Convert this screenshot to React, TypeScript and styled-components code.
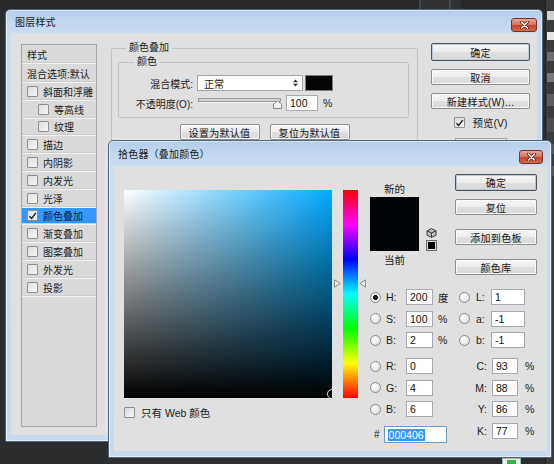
import React from "react";
import styled, { createGlobalStyle } from "styled-components";

const GlobalStyle = createGlobalStyle`
  html, body {
    margin: 0;
    padding: 0;
    background: #2a2c2e;
  }
  body {
    font-family: "Liberation Sans", "Noto Sans CJK SC", sans-serif;
    font-size: 10px;
    color: #1b1b1b;
  }
  * {
    box-sizing: border-box;
  }
`;

type StyleItem = {
  label: string;
  indent?: boolean;
  checked?: boolean;
  selected?: boolean;
};

type Field = {
  key: string;
  value: string;
  unit?: string;
  checked?: boolean;
};

const styleItems: StyleItem[] = [
  { label: "斜面和浮雕" },
  { label: "等高线", indent: true },
  { label: "纹理", indent: true },
  { label: "描边" },
  { label: "内阴影" },
  { label: "内发光" },
  { label: "光泽" },
  { label: "颜色叠加", checked: true, selected: true },
  { label: "渐变叠加" },
  { label: "图案叠加" },
  { label: "外发光" },
  { label: "投影" },
];

const hsbFields: Field[] = [
  { key: "H", value: "200", unit: "度", checked: true },
  { key: "S", value: "100", unit: "%" },
  { key: "B", value: "2", unit: "%" },
];
const rgbFields: Field[] = [
  { key: "R", value: "0" },
  { key: "G", value: "4" },
  { key: "B", value: "6" },
];
const labFields: Field[] = [
  { key: "L", value: "1" },
  { key: "a", value: "-1" },
  { key: "b", value: "-1" },
];
const cmykFields: Field[] = [
  { key: "C", value: "93" },
  { key: "M", value: "88" },
  { key: "Y", value: "86" },
  { key: "K", value: "77" },
];

/* ---------- desktop ---------- */

const Desktop = styled.div`
  position: relative;
  width: 554px;
  height: 464px;
  overflow: hidden;
  background: #2a2c2e;
  display: flex;
`;

const DesktopMain = styled.div`
  flex: 1;
  display: flex;
  flex-direction: column;
`;

const TopStrip = styled.div`
  height: 9px;
  display: flex;
  justify-content: flex-end;
  padding-right: 84px;
  background: #27292b;
`;

const TopTab = styled.div<{ $w: number }>`
  width: ${(p) => p.$w}px;
  border-left: 2px solid #45484b;
  background: #303234;
`;

const DesktopFill = styled.div`
  flex: 1;
`;

const BottomStrip = styled.div`
  height: 6px;
  display: flex;
  justify-content: flex-end;
  padding-right: 24px;
  background: #2b2d2f;
`;

const TrayIcon = styled.div`
  width: 19px;
  height: 6px;
  background: #e9f3e9;
  border: 1px solid #9ab79a;
  border-bottom: none;
  display: flex;
  justify-content: center;
  &::after {
    content: "";
    width: 9px;
    height: 4px;
    margin-top: 1px;
    background: #35b24a;
  }
`;

const SidePanel = styled.div`
  width: 9px;
  background: #3a3b3d;
  border-left: 1px solid #222;
  display: flex;
  flex-direction: column;
  align-items: flex-end;
  padding-top: 11px;
  gap: 12px;
`;

const SideIcon = styled.div<{ $h: number; $c: string }>`
  width: 7px;
  height: ${(p) => p.$h}px;
  background: ${(p) => p.$c};
`;

/* ---------- window chrome ---------- */

const Window = styled.div<{ $x: number; $y: number; $w: number; $h: number }>`
  position: absolute;
  left: ${(p) => p.$x}px;
  top: ${(p) => p.$y}px;
  width: ${(p) => p.$w}px;
  height: ${(p) => p.$h}px;
  display: flex;
  flex-direction: column;
  padding: 0 5px 6px;
  border: 1px solid #53677c;
  border-radius: 5px 5px 0 0;
  background: linear-gradient(to bottom, #b4cde8 0, #c4d8ee 14px, #cbddf1 26px, #c7daee 100%);
  box-shadow: inset 0 0 0 1px rgba(255, 255, 255, 0.45);
`;

const TitleBar = styled.div<{ $h: number; $pr: number }>`
  height: ${(p) => p.$h}px;
  flex: none;
  display: flex;
  align-items: center;
  justify-content: space-between;
  padding: 0 ${(p) => p.$pr}px 0 4px;
`;

const TitleText = styled.span`
  font-size: 10px;
  color: #1a1a1a;
  letter-spacing: 0.2px;
`;

const CloseButton = styled.div<{ $w: number; $mt: number }>`
  width: ${(p) => p.$w}px;
  height: 14px;
  margin-top: ${(p) => p.$mt}px;
  border: 1px solid #7b3226;
  border-radius: 3px;
  background: linear-gradient(to bottom, #e7a394 0%, #d7775f 45%, #c5432c 55%, #d46a4d 100%);
  display: flex;
  align-items: center;
  justify-content: center;
`;

const CloseIcon = () => (
  <svg width="9" height="8" viewBox="0 0 9 8">
    <path d="M1.5 1 L7.5 7 M7.5 1 L1.5 7" stroke="#5a1c12" strokeWidth="3" strokeLinecap="round" />
    <path d="M1.5 1 L7.5 7 M7.5 1 L1.5 7" stroke="#ffffff" strokeWidth="1.5" strokeLinecap="round" />
  </svg>
);

/* ---------- common controls ---------- */

const Button = styled.div<{ $w?: number; $h?: number; $mt?: number; $default?: boolean }>`
  width: ${(p) => (p.$w ? `${p.$w}px` : "100%")};
  height: ${(p) => p.$h ?? 16}px;
  margin-top: ${(p) => p.$mt ?? 0}px;
  flex: none;
  display: flex;
  align-items: center;
  justify-content: center;
  border: 1px solid ${(p) => (p.$default ? "#4f5357" : "#8f8f8f")};
  border-radius: 2px;
  background: linear-gradient(to bottom, #f6f6f6 0%, #ececec 50%, #e0e0e0 51%, #d9d9d9 100%);
  box-shadow: ${(p) => (p.$default ? "inset 0 0 0 1px #b9c9da" : "inset 0 0 0 1px #fafafa")};
  font-size: 10px;
  color: #151515;
  letter-spacing: 0.3px;
`;

const Box = styled.span<{ $size?: number }>`
  width: ${(p) => p.$size ?? 11}px;
  height: ${(p) => p.$size ?? 11}px;
  flex: none;
  display: inline-flex;
  align-items: center;
  justify-content: center;
  border: 1px solid #8e8f91;
  border-radius: 1px;
  background: linear-gradient(135deg, #dcdcdc 0%, #f7f7f7 100%);
`;

const CheckMark = () => (
  <svg width="10" height="10" viewBox="0 0 10 10">
    <path d="M1.6 5.2 L4 7.8 L8.8 1.6" fill="none" stroke="#1a1a1a" strokeWidth="1.5" />
  </svg>
);

const Checkbox: React.FC<{ checked?: boolean }> = ({ checked }) => (
  <Box>{checked && <CheckMark />}</Box>
);

const Radio = styled.span<{ $checked?: boolean }>`
  width: 11px;
  height: 11px;
  flex: none;
  border-radius: 50%;
  border: 1px solid #8a8a8a;
  background: ${(p) =>
    p.$checked
      ? "radial-gradient(circle, #1b1b1b 0, #1b1b1b 2.3px, #f4f4f4 2.8px, #e2e2e2 100%)"
      : "radial-gradient(circle at 35% 35%, #ffffff 0, #f1f1f1 40%, #d6d6d6 100%)"};
`;

const TextBox = styled.div<{ $w: number; $h?: number; $focus?: boolean }>`
  width: ${(p) => p.$w}px;
  height: ${(p) => p.$h ?? 16}px;
  flex: none;
  display: flex;
  align-items: center;
  padding-left: 3px;
  background: #ffffff;
  border: 1px solid ${(p) => (p.$focus ? "#6f9bc9" : "#a4aab1")};
  font-size: 10.5px;
  color: #111;
`;

const Selection = styled.span`
  background: #3399ff;
  color: #ffffff;
  padding: 0 1px;
  line-height: 12px;
`;

/* ---------- layer style dialog ---------- */

const LayerBody = styled.div`
  flex: 1;
  display: flex;
  align-items: flex-start;
  padding: 0 9px 0 10px;
  background: #e0e0e0;
`;

const StyleList = styled.div`
  margin-top: 11px;
  width: 76px;
  height: 383px;
  flex: none;
  border: 1px solid #a6a6a6;
  background: #dadada;
`;

const ListRow = styled.div<{ $h: number; $selected?: boolean; $indent?: boolean }>`
  height: ${(p) => p.$h}px;
  display: flex;
  align-items: center;
  gap: 5px;
  padding-left: ${(p) => (p.$indent ? 16 : 5)}px;
  border-bottom: 1px solid #f2f2f2;
  box-shadow: inset 0 -1px 0 #cdcdcd;
  background: ${(p) => (p.$selected ? "#3399ff" : "transparent")};
  color: ${(p) => (p.$selected ? "#0c1a2c" : "#1b1b1b")};
  white-space: nowrap;
`;

const Middle = styled.div`
  margin-left: 14px;
  width: 307px;
  flex: none;
`;

const Group = styled.fieldset<{ $w: number; $h?: number; $mt: number }>`
  width: ${(p) => p.$w}px;
  ${(p) => (p.$h ? `height: ${p.$h}px;` : "")}
  margin: ${(p) => p.$mt}px 0 0;
  padding: 0 6px;
  border: 1px solid #c3c3c3;
  border-radius: 2px;
  min-width: 0;
`;

const InnerGroup = styled(Group)`
  padding: 7px 0 6px;
`;

const GroupTitle = styled.legend<{ $offset: number }>`
  margin-left: ${(p) => p.$offset}px;
  padding: 0 3px;
  font-size: 10px;
  line-height: 12px;
  color: #1a1a1a;
`;

const FormRow = styled.div<{ $mt?: number }>`
  height: 16px;
  margin-top: ${(p) => p.$mt ?? 0}px;
  display: flex;
  align-items: center;
`;

const FormLabel = styled.span`
  width: 74px;
  flex: none;
  text-align: right;
  white-space: nowrap;
`;

const Select = styled.div`
  width: 106px;
  height: 16px;
  margin-left: 4px;
  display: flex;
  align-items: center;
  justify-content: space-between;
  padding: 0 4px 0 6px;
  background: #ffffff;
  border: 1px solid #a3a3a3;
`;

const SelectArrows = () => (
  <svg width="5" height="8" viewBox="0 0 5 8">
    <path d="M0 3.2 L2.5 0.5 L5 3.2 Z M0 4.8 L2.5 7.5 L5 4.8 Z" fill="#333" />
  </svg>
);

const ColorChip = styled.div`
  width: 28px;
  height: 16px;
  margin-left: 2px;
  background: #050505;
  border: 1px solid #7c7c7c;
`;

const Slider = () => (
  <svg width="84" height="16" viewBox="0 0 84 16" style={{ marginLeft: 5, flex: "none" }}>
    <rect x="0.5" y="3.5" width="82" height="3" fill="#d2d2d2" stroke="#9c9c9c" />
    <line x1="1" y1="7.5" x2="83" y2="7.5" stroke="#f7f7f7" />
    <path d="M75.5 13.5 V9.2 L79.5 5.8 L83.5 9.2 V13.5 Z" fill="#f1f1f1" stroke="#8d8d8d" />
  </svg>
);

const Unit = styled.span<{ $ml: number }>`
  margin-left: ${(p) => p.$ml}px;
  flex: none;
  font-size: 10.5px;
`;

const DefaultsRow = styled.div`
  margin-top: 6px;
  display: flex;
  justify-content: center;
  gap: 10px;
`;

const SideButtons = styled.div`
  margin-left: 13px;
  width: 99px;
  flex: none;
  display: flex;
  flex-direction: column;
  align-items: center;
`;

const PreviewRow = styled.div`
  margin-top: 8px;
  height: 11px;
  display: flex;
  align-items: center;
  gap: 8px;
  font-size: 10.5px;
`;

const PreviewBox = styled.div`
  margin-top: 10px;
  width: 52px;
  height: 40px;
  border: 1px solid #a2a2a2;
  background: #e6e6e6;
`;

/* ---------- color picker ---------- */

const PickerBody = styled.div`
  flex: 1;
  display: flex;
  align-items: flex-start;
  padding: 8px 0 0 10px;
  background: #e0e0e0;
`;

const FieldColumn = styled.div`
  margin-top: 16px;
  width: 208px;
  flex: none;
`;

const ColorField = styled.div<{ $hue: number }>`
  position: relative;
  width: 208px;
  height: 208px;
  overflow: hidden;
  background: linear-gradient(to top, #000 0%, rgba(0, 0, 0, 0) 100%),
    linear-gradient(to right, #ffffff 0%, hsl(${(p) => p.$hue}, 100%, 50%) 100%);
`;

const FieldMarker = styled.span`
  position: absolute;
  width: 10px;
  height: 10px;
  border-radius: 50%;
  border: 1.5px solid #d8d8d8;
  box-shadow: 0 0 0 0.5px #333;
`;

const WebRow = styled.div`
  margin-top: 7px;
  display: flex;
  align-items: center;
  gap: 6px;
  font-size: 10.5px;
`;

const HueWrap = styled.div`
  position: relative;
  margin-top: 16px;
  width: 35px;
  height: 208px;
  flex: none;
  padding: 0 9px 0 11px;
`;

const HueBar = styled.div`
  width: 15px;
  height: 208px;
  background: linear-gradient(
    to bottom,
    #ff0000 0%,
    #ff00ff 16.7%,
    #0000ff 33.3%,
    #00ffff 50%,
    #00ff00 66.7%,
    #ffff00 83.3%,
    #ff0000 100%
  );
`;

const HueArrow = styled.svg<{ $side: "left" | "right"; $top: number }>`
  position: absolute;
  top: ${(p) => p.$top}px;
  ${(p) => (p.$side === "left" ? "left: 2px;" : "right: 1px;")}
`;

const InfoColumn = styled.div`
  margin-left: 3px;
  width: 167px;
  flex: none;
  display: flex;
  flex-direction: column;
`;

const TopRow = styled.div`
  display: flex;
  justify-content: space-between;
`;

const SwatchColumn = styled.div`
  padding-top: 9px;
  width: 67px;
  display: flex;
  flex-direction: column;
`;

const SwatchLabel = styled.span<{ $mt?: number }>`
  width: 49px;
  margin-top: ${(p) => p.$mt ?? 0}px;
  text-align: center;
  line-height: 13px;
  font-size: 10.5px;
`;

const SwatchRow = styled.div`
  margin-top: 1px;
  display: flex;
  align-items: flex-end;
  gap: 7px;
`;

const Swatch = styled.div<{ $color: string }>`
  width: 49px;
  height: 54px;
  background: ${(p) => p.$color};
`;

const IconStack = styled.div`
  display: flex;
  flex-direction: column;
  gap: 2px;
`;

const MiniSwatch = styled.div<{ $color: string }>`
  width: 11px;
  height: 11px;
  border: 1px solid #6a6a6a;
  box-shadow: inset 0 0 0 1px #d8d8d8;
  background: ${(p) => p.$color};
`;

const Cube = () => (
  <svg width="11" height="10" viewBox="0 0 11 10">
    <path d="M5.5 0.6 L10 2.8 V7.2 L5.5 9.4 L1 7.2 V2.8 Z" fill="#bdbdbd" stroke="#3a3a3a" />
    <path d="M1 2.8 L5.5 5 L10 2.8 M5.5 5 V9.4" fill="none" stroke="#3a3a3a" />
  </svg>
);

const PickerButtons = styled.div`
  width: 82px;
  display: flex;
  flex-direction: column;
`;

const FieldsArea = styled.div`
  margin-top: 14px;
  display: flex;
  gap: 9px;
`;

const FieldColumnGroup = styled.div<{ $w: number }>`
  width: ${(p) => p.$w}px;
  display: flex;
  flex-direction: column;
`;

const FieldGroup = styled.div<{ $mt?: number }>`
  margin-top: ${(p) => p.$mt ?? 0}px;
  display: flex;
  flex-direction: column;
  gap: 5.5px;
`;

const FieldRow = styled.div`
  height: 16px;
  display: flex;
  align-items: center;
`;

const FieldKey = styled.span<{ $w: number; $ml: number; $right?: boolean }>`
  width: ${(p) => p.$w}px;
  margin-left: ${(p) => p.$ml}px;
  flex: none;
  text-align: ${(p) => (p.$right ? "right" : "left")};
  font-size: 10.5px;
`;

const HexRow = styled.div`
  margin-top: 9px;
  height: 17px;
  display: flex;
  align-items: center;
  padding-left: 4px;
  gap: 4px;
  font-size: 10px;
`;

const FieldLine: React.FC<{ field: Field; keyW: number; boxW: number; unitMl?: number }> = ({
  field,
  keyW,
  boxW,
  unitMl = 5,
}) => (
  <FieldRow>
    <Radio $checked={field.checked} />
    <FieldKey $w={keyW} $ml={keyW === 20 ? 5 : 6}>
      {field.key}:
    </FieldKey>
    <TextBox $w={boxW}>{field.value}</TextBox>
    {field.unit && <Unit $ml={unitMl}>{field.unit}</Unit>}
  </FieldRow>
);

export default function App() {
  const hue = 200;
  return (
    <Desktop>
      <GlobalStyle />
      <DesktopMain>
        <TopStrip>
          <TopTab $w={30} />
          <TopTab $w={12} />
        </TopStrip>
        <DesktopFill />
        <BottomStrip>
          <TrayIcon />
        </BottomStrip>
      </DesktopMain>
      <SidePanel>
        <SideIcon $h={9} $c="#cfcfcf" />
        <SideIcon $h={8} $c="#e6e6e6" />
        <SideIcon $h={9} $c="#6b6d70" />
        <SideIcon $h={9} $c="#77797c" />
        <SideIcon $h={12} $c="#5a5c5f" />
        <SideIcon $h={14} $c="#4a4c4f" />
        <SideIcon $h={10} $c="#55575a" />
        <SideIcon $h={10} $c="#55575a" />
      </SidePanel>

      <Window $x={5} $y={9} $w={538} $h={433}>
        <TitleBar $h={23} $pr={0}>
          <TitleText>图层样式</TitleText>
          <CloseButton $w={26} $mt={6}>
            <CloseIcon />
          </CloseButton>
        </TitleBar>
        <LayerBody>
          <StyleList>
            <ListRow $h={19}>样式</ListRow>
            <ListRow $h={19}>混合选项:默认</ListRow>
            {styleItems.map((item) => (
              <ListRow key={item.label} $h={17.8} $indent={item.indent} $selected={item.selected}>
                <Checkbox checked={item.checked} />
                {item.label}
              </ListRow>
            ))}
          </StyleList>

          <Middle>
            <Group $w={307} $h={385} $mt={9}>
              <GroupTitle $offset={8}>颜色叠加</GroupTitle>
              <InnerGroup $w={291} $mt={2}>
                <GroupTitle $offset={15}>颜色</GroupTitle>
                <FormRow>
                  <FormLabel>混合模式:</FormLabel>
                  <Select>
                    <span>正常</span>
                    <SelectArrows />
                  </Select>
                  <ColorChip />
                </FormRow>
                <FormRow $mt={4}>
                  <FormLabel>不透明度(O):</FormLabel>
                  <Slider />
                  <TextBox $w={32} style={{ marginLeft: 4 }}>
                    100
                  </TextBox>
                  <Unit $ml={5}>%</Unit>
                </FormRow>
              </InnerGroup>
              <DefaultsRow>
                <Button $w={80}>设置为默认值</Button>
                <Button $w={80}>复位为默认值</Button>
              </DefaultsRow>
            </Group>
          </Middle>

          <SideButtons>
            <Button $h={18} $mt={10} $default>
              确定
            </Button>
            <Button $mt={8}>取消</Button>
            <Button $mt={8}>新建样式(W)...</Button>
            <PreviewRow>
              <Checkbox checked />
              预览(V)
            </PreviewRow>
            <PreviewBox />
          </SideButtons>
        </LayerBody>
      </Window>

      <Window $x={108} $y={140} $w={444} $h={318}>
        <TitleBar $h={25} $pr={3}>
          <TitleText>拾色器（叠加颜色）</TitleText>
          <CloseButton $w={24} $mt={6}>
            <CloseIcon />
          </CloseButton>
        </TitleBar>
        <PickerBody>
          <FieldColumn>
            <ColorField $hue={hue}>
              <FieldMarker style={{ left: 203, top: 199 }} />
            </ColorField>
            <WebRow>
              <Checkbox />
              只有 Web 颜色
            </WebRow>
          </FieldColumn>

          <HueWrap>
            <HueBar />
            <HueArrow $side="left" $top={89} width="7" height="9" viewBox="0 0 7 9">
              <path d="M0.5 0.8 L6.2 4.5 L0.5 8.2 Z" fill="#ececec" stroke="#8a8a8a" />
            </HueArrow>
            <HueArrow $side="right" $top={89} width="7" height="9" viewBox="0 0 7 9">
              <path d="M6.5 0.8 L0.8 4.5 L6.5 8.2 Z" fill="#ececec" stroke="#8a8a8a" />
            </HueArrow>
          </HueWrap>

          <InfoColumn>
            <TopRow>
              <SwatchColumn>
                <SwatchLabel>新的</SwatchLabel>
                <SwatchRow>
                  <Swatch $color="#000406" />
                  <IconStack>
                    <Cube />
                    <MiniSwatch $color="#000406" />
                  </IconStack>
                </SwatchRow>
                <SwatchLabel $mt={3}>当前</SwatchLabel>
              </SwatchColumn>
              <PickerButtons>
                <Button $h={17} $default>
                  确定
                </Button>
                <Button $mt={8}>复位</Button>
                <Button $mt={14}>添加到色板</Button>
                <Button $mt={14}>颜色库</Button>
              </PickerButtons>
            </TopRow>

            <FieldsArea>
              <FieldColumnGroup $w={80}>
                <FieldGroup>
                  {hsbFields.map((f) => (
                    <FieldLine key={f.key} field={f} keyW={20} boxW={27} />
                  ))}
                </FieldGroup>
                <FieldGroup $mt={10}>
                  {rgbFields.map((f) => (
                    <FieldLine key={f.key} field={f} keyW={20} boxW={27} />
                  ))}
                </FieldGroup>
                <HexRow>
                  <span>#</span>
                  <TextBox $w={63} $h={17} $focus>
                    <Selection>000406</Selection>
                  </TextBox>
                </HexRow>
              </FieldColumnGroup>

              <FieldColumnGroup $w={78}>
                <FieldGroup>
                  {labFields.map((f) => (
                    <FieldLine key={f.key} field={f} keyW={15} boxW={34} />
                  ))}
                </FieldGroup>
                <FieldGroup $mt={10}>
                  {cmykFields.map((f) => (
                    <FieldRow key={f.key}>
                      <FieldKey $w={28} $ml={0} $right>
                        {f.key}:
                      </FieldKey>
                      <TextBox $w={26} style={{ marginLeft: 5 }}>
                        {f.value}
                      </TextBox>
                      <Unit $ml={7}>%</Unit>
                    </FieldRow>
                  ))}
                </FieldGroup>
              </FieldColumnGroup>
            </FieldsArea>
          </InfoColumn>
        </PickerBody>
      </Window>
    </Desktop>
  );
}
